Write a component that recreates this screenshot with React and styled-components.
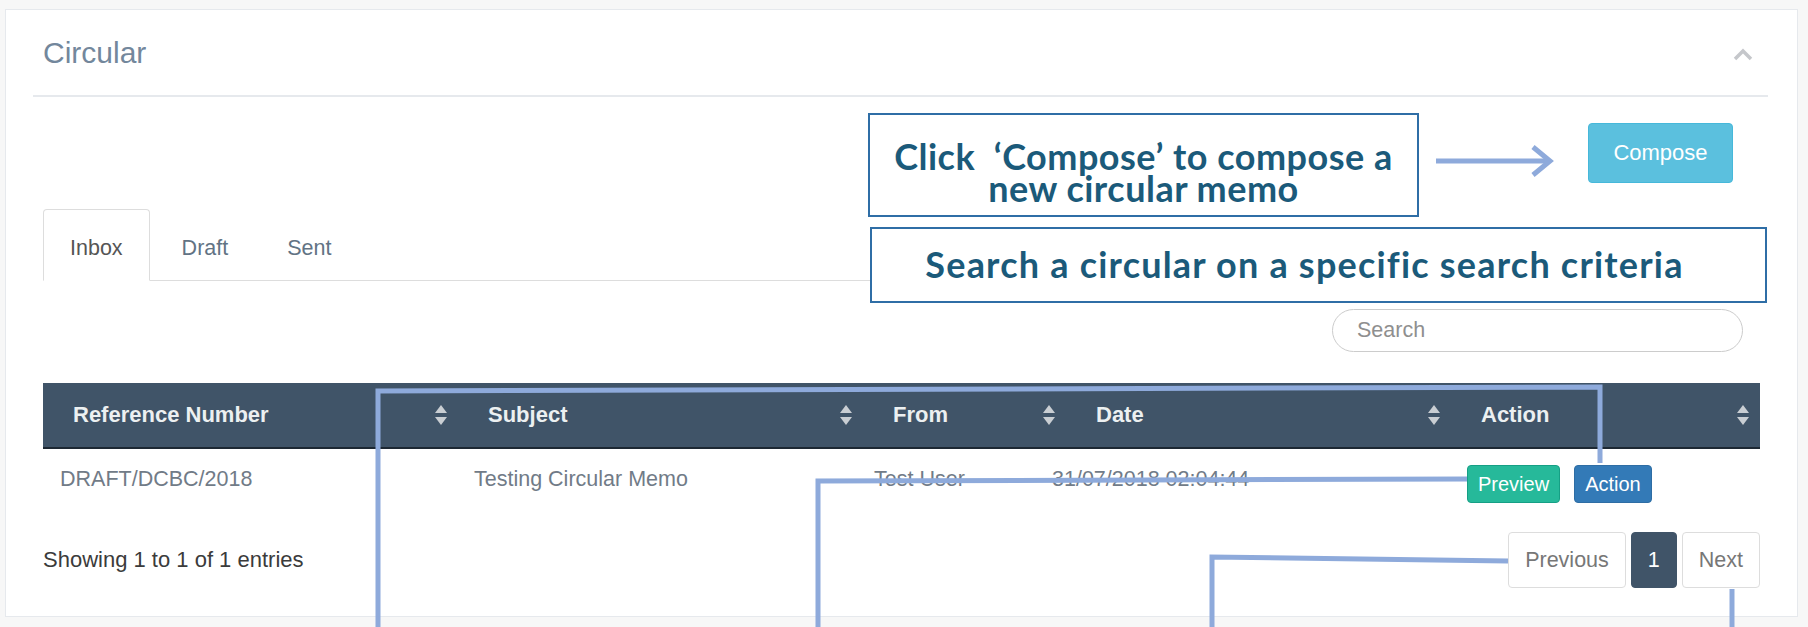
import styled, { createGlobalStyle } from "styled-components";

const GlobalStyle = createGlobalStyle`
  html, body {
    margin: 0;
    padding: 0;
    background: #f7f7f7;
  }
  body {
    font-family: "Liberation Sans", Arial, sans-serif;
  }
  * {
    box-sizing: border-box;
  }
`;

const Page = styled.div`
  position: relative;
  width: 1808px;
  height: 627px;
  padding: 9px 10px 0 5px;
  overflow: hidden;
`;

const Panel = styled.section`
  height: 608px;
  background: #fff;
  border: 1px solid #e6e9ed;
  display: flex;
  flex-direction: column;
`;

const PanelHeader = styled.div`
  display: flex;
  align-items: center;
  justify-content: space-between;
  height: 87px;
  margin: 0 29px 0 27px;
  padding: 0 15px 0 10px;
  border-bottom: 2px solid #e6e9ed;
`;

const PanelTitle = styled.h2`
  margin: 0;
  font-size: 30px;
  font-weight: 400;
  color: #73879c;
`;

const Collapse = styled.svg`
  width: 20px;
  height: 13px;
  margin-top: 4px;
`;

const PanelBody = styled.div`
  padding: 0 37px;
  display: flex;
  flex-direction: column;
`;

const ComposeRow = styled.div`
  display: flex;
  justify-content: flex-end;
  margin-top: 26px;
  padding-right: 27px;
`;

const ComposeButton = styled.button`
  width: 145px;
  height: 60px;
  background: #5bc0de;
  border: 1px solid #46b8da;
  border-radius: 4px;
  color: #fff;
  font-family: inherit;
  font-size: 22px;
`;

const TabList = styled.ul`
  display: flex;
  list-style: none;
  margin: 26px 0 0;
  padding: 0;
  border-bottom: 1px solid #ddd;
`;

const Tab = styled.li`
  display: flex;
  align-items: center;
  height: 72px;
  margin: 0 5px -1px 0;
  padding: 7px 26px 0;
  font-size: 21.5px;
  color: ${({ $active }) => ($active ? "#555" : "#627384")};
  background: ${({ $active }) => ($active ? "#fff" : "transparent")};
  border: 1px solid ${({ $active }) => ($active ? "#ddd" : "transparent")};
  border-bottom-color: ${({ $active }) => ($active ? "#fff" : "transparent")};
  border-radius: 4px 4px 0 0;
`;

const SearchRow = styled.div`
  display: flex;
  justify-content: flex-end;
  margin-top: 28px;
  padding-right: 17px;
`;

const SearchInput = styled.input`
  width: 411px;
  height: 43px;
  border: 1px solid #ccc;
  border-radius: 22px;
  padding: 0 24px;
  font-family: inherit;
  font-size: 21.5px;
  color: #555;
  outline: none;

  &::placeholder {
    color: #8f8f8f;
  }
`;

const HeadRow = styled.div`
  display: grid;
  grid-template-columns: 415px 405px 203px 385px 1fr;
  height: 66px;
  margin-top: 31px;
  background: #405468;
  border-bottom: 2px solid #1d2833;
`;

const HeadCell = styled.div`
  position: relative;
  display: flex;
  align-items: center;
  padding-left: 30px;
  font-size: 22px;
  font-weight: 700;
  color: #ecf0f1;
`;

const SortIcon = styled.svg`
  position: absolute;
  right: 11px;
  top: 50%;
  width: 12px;
  height: 24px;
  margin-top: -12px;
`;

const BodyRow = styled.div`
  display: grid;
  grid-template-columns: 414px 400px 178px 415px 1fr;
  height: 60px;
  align-items: center;
  font-size: 21.5px;
  color: #717b87;
`;

const BodyCell = styled.div`
  padding-left: 17px;
  white-space: nowrap;
`;

const ActionCell = styled(BodyCell)`
  display: flex;
  gap: 14px;
  padding-top: 10px;
`;

const SmallButton = styled.button`
  height: 38px;
  padding: 0 10px;
  border-radius: 4px;
  border: 1px solid ${({ $variant }) => ($variant === "success" ? "#169f85" : "#2e6da4")};
  background: ${({ $variant }) => ($variant === "success" ? "#26b99a" : "#337ab7")};
  color: #fff;
  font-family: inherit;
  font-size: 20px;
`;

const Footer = styled.div`
  display: flex;
  align-items: center;
  justify-content: space-between;
  margin-top: 23px;
`;

const Info = styled.div`
  font-size: 22px;
  color: #3b3b3b;
`;

const Pagination = styled.div`
  display: flex;
  gap: 5px;
`;

const PageButton = styled.button`
  height: 56px;
  padding: 0 16px;
  border-radius: 4px;
  border: 1px solid ${({ $active }) => ($active ? "#405468" : "#ddd")};
  background: ${({ $active }) => ($active ? "#405468" : "#fff")};
  color: ${({ $active }) => ($active ? "#fff" : "#777")};
  font-family: inherit;
  font-size: 21.5px;
`;

/* annotations laid over the screenshot */

const Callout = styled.div`
  position: absolute;
  left: ${({ $x }) => $x}px;
  top: ${({ $y }) => $y}px;
  width: ${({ $w }) => $w}px;
  height: ${({ $h }) => $h}px;
  padding: ${({ $pt }) => $pt}px ${({ $pr }) => $pr || 0}px 0 0;
  background: #fff;
  border: 2px solid #2f6ea6;
  font-family: Lato, "Open Sans", sans-serif;
  font-weight: 700;
  font-size: 36px;
  letter-spacing: ${({ $ls }) => $ls}px;
  line-height: 32px;
  color: #1b5a7a;
  text-align: center;
  white-space: pre;
`;

const Connectors = styled.svg`
  position: absolute;
  left: 0;
  top: 0;
  width: 1808px;
  height: 627px;
  pointer-events: none;
`;

const Sort = () => (
  <SortIcon viewBox="0 0 12 24">
    <polygon points="0,10 6,2 12,10" fill="#c9ced3" />
    <polygon points="0,14 6,22 12,14" fill="#c9ced3" />
  </SortIcon>
);

const columns = ["Reference Number", "Subject", "From", "Date", "Action"];

export default function App() {
  return (
    <>
      <GlobalStyle />
      <Page>
        <Panel>
          <PanelHeader>
            <PanelTitle>Circular</PanelTitle>
            <Collapse viewBox="0 0 20 13">
              <polyline points="2,11 10,3 18,11" fill="none" stroke="#c5c7cb" strokeWidth="3.5" />
            </Collapse>
          </PanelHeader>

          <PanelBody>
            <ComposeRow>
              <ComposeButton>Compose</ComposeButton>
            </ComposeRow>

            <TabList>
              <Tab $active>Inbox</Tab>
              <Tab>Draft</Tab>
              <Tab>Sent</Tab>
            </TabList>

            <SearchRow>
              <SearchInput placeholder="Search" />
            </SearchRow>

            <HeadRow>
              {columns.map((c) => (
                <HeadCell key={c}>
                  {c}
                  <Sort />
                </HeadCell>
              ))}
            </HeadRow>

            <BodyRow>
              <BodyCell>DRAFT/DCBC/2018</BodyCell>
              <BodyCell>Testing Circular Memo</BodyCell>
              <BodyCell>Test User</BodyCell>
              <BodyCell>31/07/2018 02:04:44</BodyCell>
              <ActionCell>
                <SmallButton $variant="success">Preview</SmallButton>
                <SmallButton>Action</SmallButton>
              </ActionCell>
            </BodyRow>

            <Footer>
              <Info>Showing 1 to 1 of 1 entries</Info>
              <Pagination>
                <PageButton>Previous</PageButton>
                <PageButton $active>1</PageButton>
                <PageButton>Next</PageButton>
              </Pagination>
            </Footer>
          </PanelBody>
        </Panel>

        <Callout $x={868} $y={113} $w={551} $h={104} $pt={25} $ls={0.5}>
          {"Click  \u2018Compose\u2019 to compose a\nnew circular memo"}
        </Callout>
        <Callout $x={870} $y={227} $w={897} $h={76} $pt={19} $pr={28} $ls={1.2}>
          Search a circular on a specific search criteria
        </Callout>

        <Connectors viewBox="0 0 1808 627">
          <g fill="none" stroke="#8eaadb" strokeWidth="5">
            <polyline points="378,627 378,391 1600,387 1600,463" />
            <polyline points="818,627 818,481 1467,479" />
            <polyline points="1212,627 1212,557 1508,561" />
            <polyline points="1732,589 1732,627" />
            <line x1="1436" y1="161" x2="1547" y2="161" />
            <polyline points="1533,147 1550,161 1533,175" />
          </g>
        </Connectors>
      </Page>
    </>
  );
}
